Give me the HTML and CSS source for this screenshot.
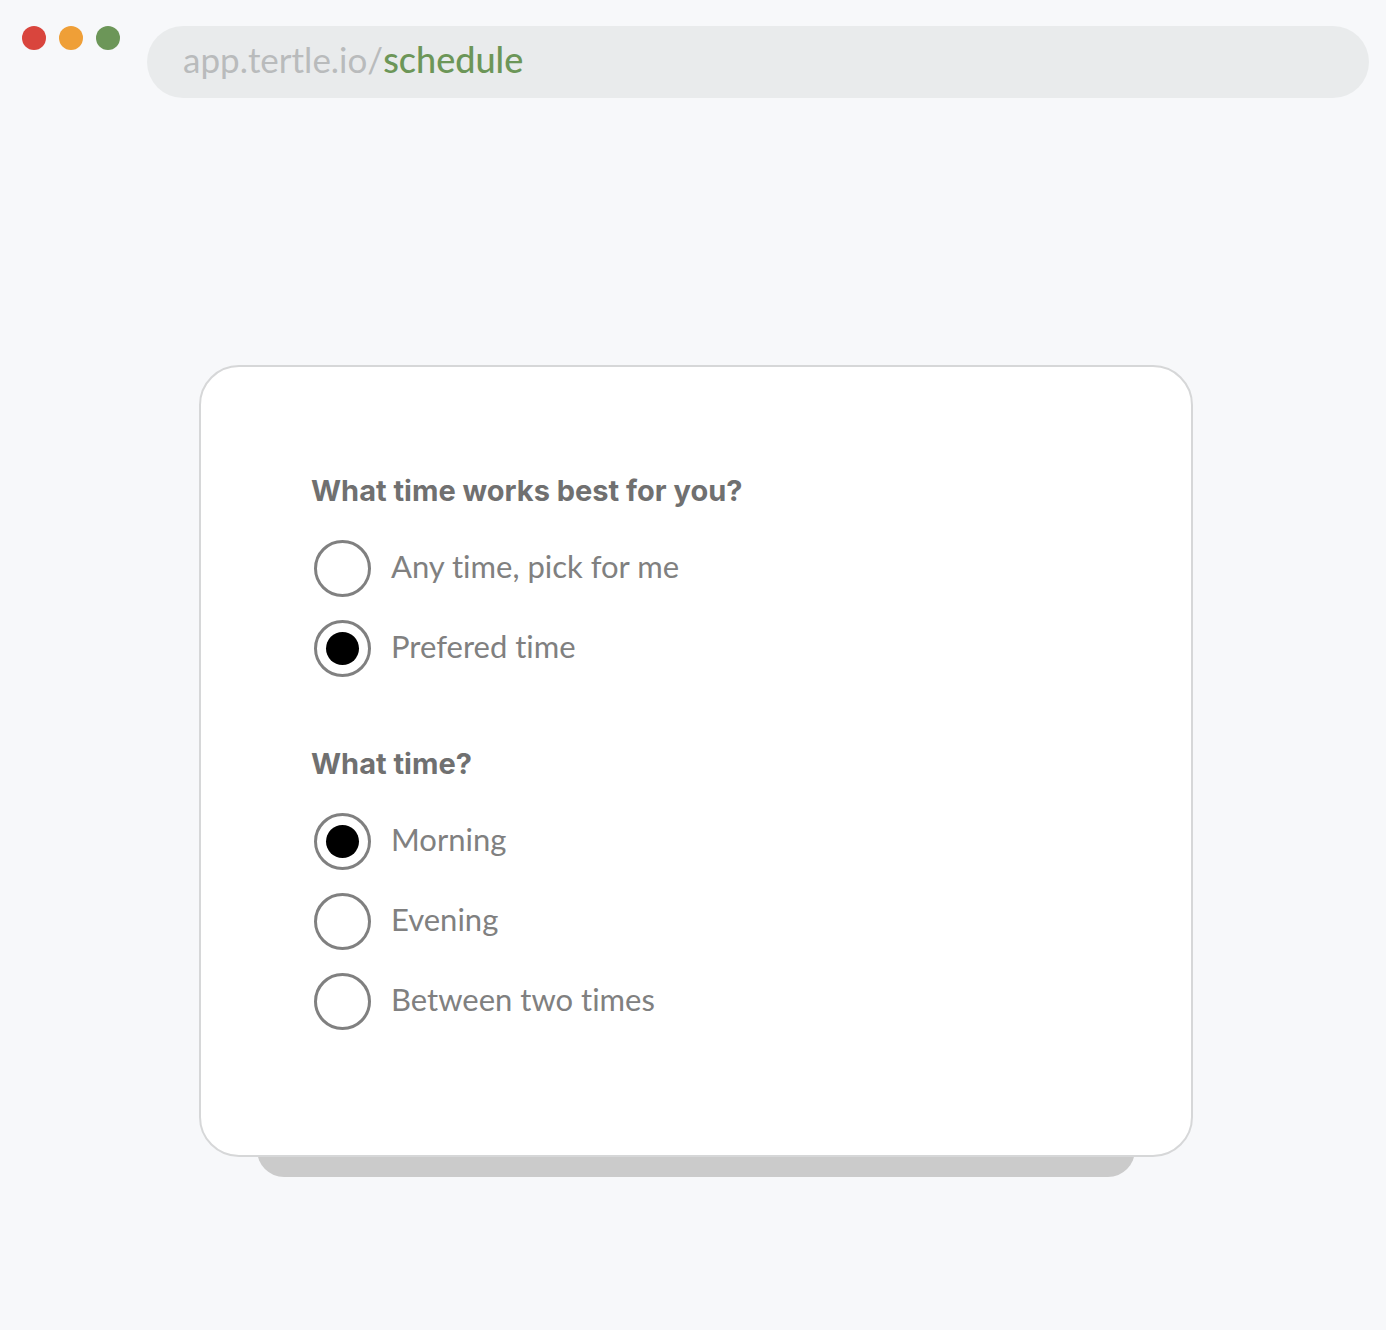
FILE: index.html
```html
<!DOCTYPE html>
<html lang="en">
<head>
  <meta charset="utf-8">
  <meta name="viewport" content="width=device-width, initial-scale=1">
  <title>Schedule</title>
  <link rel="stylesheet" href="styles.css">
</head>
<body>
  <header class="toolbar">
    <div class="dots">
      <span class="dot dot-close"></span>
      <span class="dot dot-minimize"></span>
      <span class="dot dot-expand"></span>
    </div>
    <div class="address"><span>app.tertle.io/</span><span class="address-path">schedule</span></div>
  </header>

  <main class="stage">
    <form class="card">
      <fieldset class="group">
        <legend class="question">What time works best for you?</legend>
        <div class="options">
          <label class="option"><input class="radio" type="radio" name="preference" value="any">Any time, pick for me</label>
          <label class="option"><input class="radio" type="radio" name="preference" value="preferred" checked>Prefered time</label>
        </div>
      </fieldset>
      <fieldset class="group">
        <legend class="question">What time?</legend>
        <div class="options">
          <label class="option"><input class="radio" type="radio" name="time" value="morning" checked>Morning</label>
          <label class="option"><input class="radio" type="radio" name="time" value="evening">Evening</label>
          <label class="option"><input class="radio" type="radio" name="time" value="between">Between two times</label>
        </div>
      </fieldset>
    </form>
    <div class="card-base"></div>
  </main>
</body>
</html>
```

FILE: styles.css
```css
* {
  box-sizing: border-box;
}

body {
  margin: 0;
  min-height: 100vh;
  background: #f7f8fa;
  color: #808080;
  font-family: Lato, "Open Sans", sans-serif;
  font-variant-ligatures: none;
}

.toolbar {
  display: flex;
  align-items: flex-start;
  gap: 27px;
  padding: 26px 17px 0 22px;
}

.dots {
  display: flex;
  gap: 13px;
}

.dot {
  width: 24px;
  height: 24px;
  border-radius: 50%;
}

.dot-close {
  background: #d9453d;
}

.dot-minimize {
  background: #ef9f37;
}

.dot-expand {
  background: #6c9658;
}

.address {
  flex: 1;
  height: 72px;
  padding: 0 36px;
  border-radius: 36px;
  background: #e9ebec;
  color: #b9bbbc;
  font-size: 35px;
  line-height: 66px;
}

.address-path {
  color: #6c9658;
  font-size: 36px;
  font-weight: 500;
}

.stage {
  padding: 267px 193px 80px 199px;
}

.card {
  position: relative;
  z-index: 1;
  display: flex;
  flex-direction: column;
  gap: 67px;
  padding: 104px 110px 125px;
  border: 2px solid #d6d7d8;
  border-radius: 40px;
  background: #fff;
}

.card-base {
  height: 40px;
  margin: -20px 58px 0;
  border-radius: 0 0 27px 27px;
  background: #cbcbcb;
}

.group {
  min-width: 0;
  margin: 0;
  padding: 0;
  border: 0;
}

.question {
  padding: 0;
  color: #707070;
  font-family: Inter, sans-serif;
  font-size: 29px;
  font-weight: 700;
  line-height: 40px;
}

.options {
  display: flex;
  flex-direction: column;
  gap: 23px;
  padding: 29px 0 0 3px;
}

.option {
  display: flex;
  align-items: flex-start;
  gap: 20px;
  font-size: 31px;
  line-height: 52px;
}

.radio {
  display: grid;
  flex: none;
  place-content: center;
  width: 57px;
  height: 57px;
  margin: 0;
  border: 3px solid #808080;
  border-radius: 50%;
  background: #fff;
  appearance: none;
}

.radio:checked::before {
  width: 33px;
  height: 33px;
  border-radius: 50%;
  background: #000;
  content: "";
}
```
